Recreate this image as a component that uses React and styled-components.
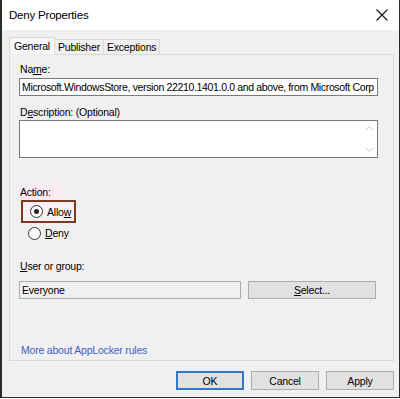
import React from "react";
import styled, { createGlobalStyle } from "styled-components";

const GlobalStyle = createGlobalStyle`
  html, body {
    margin: 0;
    padding: 0;
    background: #ffffff;
  }
  body {
    font-family: "Liberation Sans", Arial, sans-serif;
    font-size: 10.5px;
    letter-spacing: -0.2px;
    color: #000;
  }
`;

const Window = styled.div`
  width: 400px;
  height: 398px;
  box-sizing: border-box;
  border: 1px solid #2b2b2b;
  border-left-width: 2px;
  border-top: none;
  background: #f0f0f0;
  display: flex;
  flex-direction: column;
`;

const TitleBar = styled.div`
  height: 30px;
  flex: none;
  background: #fff;
  display: flex;
  align-items: center;
  justify-content: space-between;
  padding: 0 7px 0 7px;
  font-size: 11.5px;
`;

const CloseButton = styled.div`
  width: 16px;
  height: 16px;
  display: flex;
  align-items: center;
  justify-content: center;
  margin-right: 2px;
`;

const Body = styled.div`
  flex: 1;
  display: flex;
  flex-direction: column;
  padding: 7px 5px 0 7px;
`;

const TabStrip = styled.div`
  display: flex;
  align-items: flex-end;
  height: 17px;
  position: relative;
  z-index: 1;
`;

const Tab = styled.div`
  box-sizing: border-box;
  height: ${(p) => (p.$active ? "18px" : "15px")};
  padding: 0 ${(p) => (p.$active ? "4px" : "3px")};
  margin-left: ${(p) => (p.$active ? "0" : "-1px")};
  border: 1px solid #d9d9d9;
  border-bottom: ${(p) => (p.$active ? "1px solid #f0f0f0" : "none")};
  background: ${(p) => (p.$active ? "#f8f8f8" : "#f0f0f0")};
  display: flex;
  align-items: center;
  margin-bottom: ${(p) => (p.$active ? "-1px" : "0")};
`;

const Panel = styled.div`
  height: 307px;
  flex: none;
  box-sizing: border-box;
  border: 1px solid #d9d9d9;
  background: #f0f0f0;
  padding: 6px 15px 0 9px;
  display: flex;
  flex-direction: column;
`;

const Label = styled.div`
  height: 14px;
  line-height: 14px;
  margin-top: ${(p) => p.$top || 0}px;
  margin-left: 1px;
`;

const TextBox = styled.div`
  box-sizing: border-box;
  height: ${(p) => p.$h || 18}px;
  width: ${(p) => p.$w || "auto"};
  margin-top: ${(p) => p.$top || 0}px;
  border: 1px solid ${(p) => (p.$readonly ? "#adadad" : "#7a7a7a")};
  background: ${(p) => (p.$readonly ? "#f0f0f0" : "#fff")};
  padding: 0 2px;
  line-height: 16px;
  letter-spacing: ${(p) => (p.$tight ? "-0.35px" : "inherit")};
  white-space: nowrap;
  overflow: hidden;
  position: relative;
`;

const ScrollBar = styled.div`
  position: absolute;
  right: 0;
  top: 0;
  bottom: 0;
  width: 16px;
  display: flex;
  flex-direction: column;
  justify-content: space-between;
  align-items: center;
  padding: 5px 0;
  box-sizing: border-box;
`;

const ActionArea = styled.div`
  margin-top: 27px;
  display: flex;
  flex-direction: column;
  align-items: flex-start;
`;

const ActionLabel = styled.div`
  background: #fde9f1;
  padding: 0 10px 0 1px;
  height: 15px;
  line-height: 14px;
`;

const Highlight = styled.div`
  box-sizing: border-box;
  width: 55px;
  height: 23px;
  margin-left: 2px;
  border: 2px solid #7a3b1f;
  background: #fdf0f5;
  display: flex;
  align-items: center;
  padding-left: 7px;
`;

const RadioRow = styled.div`
  display: flex;
  align-items: center;
  gap: 4px;
  height: 16px;
  margin-left: ${(p) => (p.$plain ? "9px" : "0")};
  margin-top: ${(p) => (p.$plain ? "2px" : "0")};
`;

const Radio = styled.span`
  width: 11px;
  height: 11px;
  border-radius: 50%;
  border: 1px solid #333;
  background: #fff;
  display: flex;
  align-items: center;
  justify-content: center;

  &::after {
    content: "";
    width: 5px;
    height: 5px;
    border-radius: 50%;
    background: ${(p) => (p.$checked ? "#222" : "transparent")};
  }
`;

const Row = styled.div`
  display: flex;
  gap: 7px;
  margin-top: 8px;
  margin-right: 2px;
`;

const Button = styled.div`
  box-sizing: border-box;
  height: ${(p) => p.$h || 19}px;
  width: ${(p) => (p.$fill ? "auto" : `${p.$w || 68}px`)};
  flex: ${(p) => (p.$fill ? 1 : "none")};
  border: ${(p) => (p.$default ? "2px solid #3278c6" : "1px solid #adadad")};
  background: #e1e1e1;
  display: flex;
  align-items: center;
  justify-content: center;
`;

const Link = styled.div`
  margin-top: auto;
  margin-bottom: 3px;
  margin-left: 2px;
  color: #3f5fc4;
  height: 14px;
  line-height: 14px;
`;

const Footer = styled.div`
  display: flex;
  justify-content: flex-end;
  gap: 7px;
  margin-top: 10px;
`;

const U = styled.span`
  text-decoration: underline;
`;

export default function App() {
  return (
    <>
      <GlobalStyle />
      <Window>
        <TitleBar>
          <span>Deny Properties</span>
          <CloseButton>
            <svg width="12" height="12" viewBox="0 0 12 12">
              <path d="M0.5 0.5 L11.5 11.5 M11.5 0.5 L0.5 11.5" stroke="#111" strokeWidth="1.1" />
            </svg>
          </CloseButton>
        </TitleBar>
        <Body>
          <TabStrip>
            <Tab $active>General</Tab>
            <Tab>Publisher</Tab>
            <Tab>Exceptions</Tab>
          </TabStrip>
          <Panel>
            <Label $top={1}>
              Na<U>m</U>e:
            </Label>
            <TextBox $top={2} $tight>
              Microsoft.WindowsStore, version 22210.1401.0.0 and above, from Microsoft Corp
            </TextBox>
            <Label $top={9}>
              D<U>e</U>scription: (Optional)
            </Label>
            <TextBox $top={1} $h={38}>
              <ScrollBar>
                <svg width="9" height="5" viewBox="0 0 9 5">
                  <path d="M0.5 4.5 L4.5 0.5 L8.5 4.5" fill="none" stroke="#c8c8c8" />
                </svg>
                <svg width="9" height="5" viewBox="0 0 9 5">
                  <path d="M0.5 0.5 L4.5 4.5 L8.5 0.5" fill="none" stroke="#c8c8c8" />
                </svg>
              </ScrollBar>
            </TextBox>
            <ActionArea>
              <ActionLabel>Action:</ActionLabel>
              <Highlight>
                <RadioRow>
                  <Radio $checked />
                  <span>
                    Allo<U>w</U>
                  </span>
                </RadioRow>
              </Highlight>
              <RadioRow $plain>
                <Radio />
                <span>
                  <U>D</U>eny
                </span>
              </RadioRow>
            </ActionArea>
            <Label $top={18}>
              <U>U</U>ser or group:
            </Label>
            <Row>
              <TextBox $readonly $w="222px">
                Everyone
              </TextBox>
              <Button $fill $h={18}>
                <span>
                  <U>S</U>elect...
                </span>
              </Button>
            </Row>
            <Link>More about AppLocker rules</Link>
          </Panel>
          <Footer>
            <Button $default>OK</Button>
            <Button>Cancel</Button>
            <Button>Apply</Button>
          </Footer>
        </Body>
      </Window>
    </>
  );
}
